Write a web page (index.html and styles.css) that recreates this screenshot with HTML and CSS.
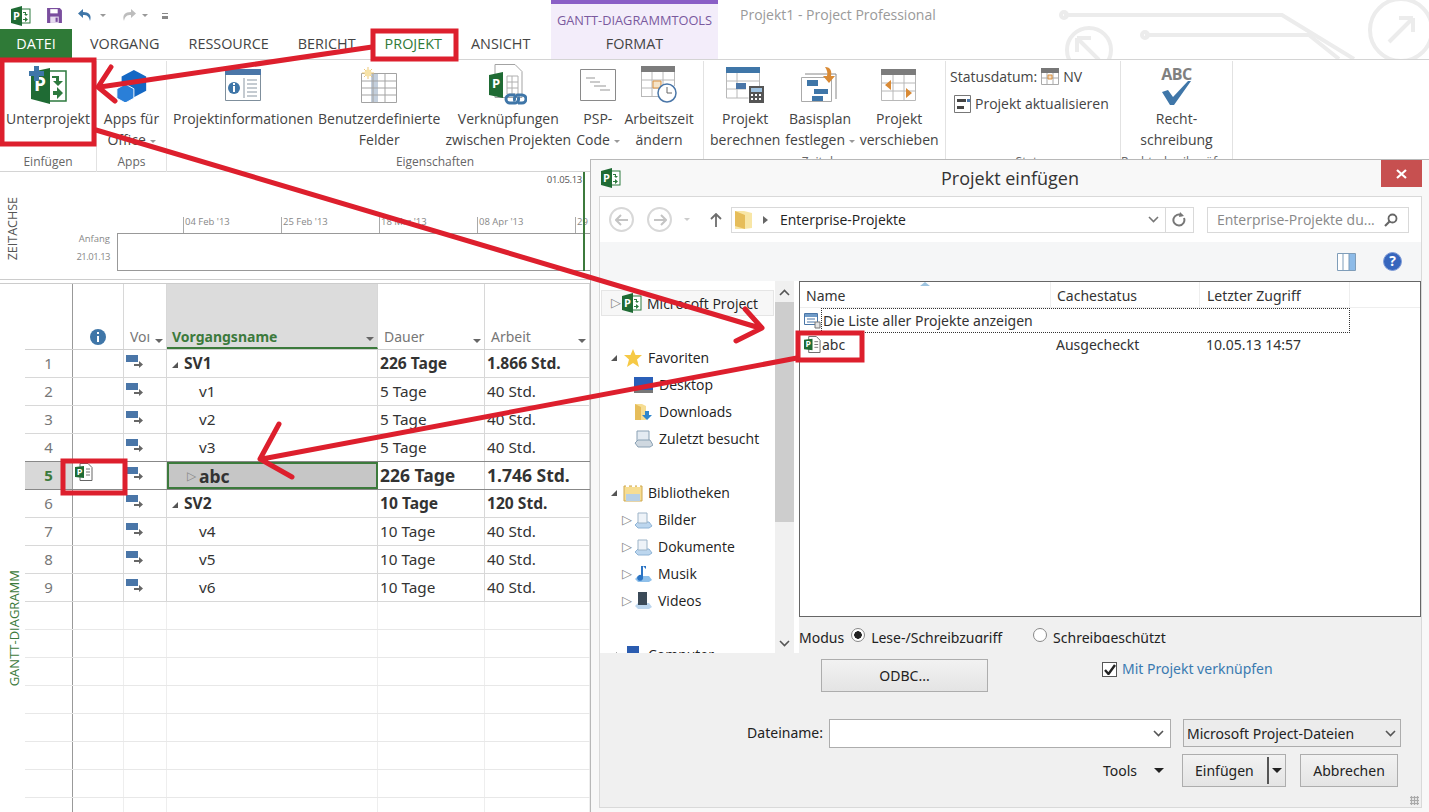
FILE: index.html
```html
<!DOCTYPE html>
<html lang="de">
  <head>
    <meta charset="UTF-8" />
    <title>Projekt einfügen</title>
    <link rel="stylesheet" href="styles.css">
  </head>
  <body>
    <svg class="defs" width="0" height="0">
      <defs>
        <symbol id="proj" viewBox="0 0 20 20">
          <rect x="9" y="3" width="10" height="14" fill="#fff" stroke="#2d7a3e" />
          <path d="M12 6h3v2h2l-2 2-2-2h1V7h-2zM12 13h2v-2l3 2.500-3 2.500v-2h-2z" fill="#2d7a3e" />
          <path d="M0 3 11 0v20L0 17z" fill="#1f6b34" />
          <text x="5.500" y="13.500" class="p-letter" text-anchor="middle">P</text>
        </symbol>
        <symbol id="pfile" viewBox="0 0 18 18">
          <path d="M5 .5h8l4 4v13H5z" fill="#fff" stroke="#666" />
          <path d="M11 6h4M11 9h4M11 12h4" stroke="#777" />
          <path d="M0 4 9 3v12L0 14z" fill="#1f6b34" />
          <text x="4.500" y="12" class="p-small" text-anchor="middle">P</text>
        </symbol>
        <symbol id="mode" viewBox="0 0 18 14">
          <path d="M0 1h12v7H0z" fill="#4a76a8" />
          <path d="M8 10h5V7l4 3.500-4 3.500V12H8z" fill="#666" />
        </symbol>
        <symbol id="folder" viewBox="0 0 20 20">
          <path d="M1 1h9l8 2v15l-8 1H1z" fill="#f8e6a6" />
          <path d="M1 1l10 4v14L1 16z" fill="#e6bd5a" />
        </symbol>
        <symbol id="lib" viewBox="0 0 20 18">
          <path d="M1 2h18v15H1z" fill="#f6dd93" stroke="#cfa951" />
          <path d="M3 10h14v7H3z" fill="#b7d0e6" />
          <path d="M3 2h3M9 2h3M14 2h3" stroke="#fff" stroke-width="2" />
        </symbol>
        <symbol id="libitem" viewBox="0 0 20 18">
          <path d="M2 14 5 11h11l3 4-3 2H5z" fill="#bcd6ee" stroke="#8fb4d6" />
          <path d="M5 2h9v10H5z" fill="#eef3f8" stroke="#9db4c8" />
        </symbol>
      </defs>
    </svg>

    <div class="titlebar">
      <div class="qat">
        <svg class="qat-icon" width="20" height="20"><use href="#proj" /></svg>
        <svg class="qat-icon" width="17" height="17" viewBox="0 0 16 16"><path d="M1 1h12l2 2v12H1z" fill="#7a4e9e" /><path d="M4 2h7v4H4z" fill="#fff" /><path d="M4 9h8v6H4z" fill="#e6dcef" /><path d="M9 10h2v4H9z" fill="#7a4e9e" /></svg>
        <svg class="qat-icon qat-undo" width="20" height="16" viewBox="0 0 20 16"><path d="M7 1 2 5.500 7 10V7c4 0 6 1 7 6 2-6-1-9-7-9z" fill="#3f76a8" /></svg>
        <span class="caret"></span>
        <svg class="qat-icon qat-redo" width="20" height="16" viewBox="0 0 20 16"><path d="M13 1l5 4.500L13 10V7c-4 0-6 1-7 6-2-6 1-9 7-9z" fill="#bdbdbd" /></svg>
        <span class="caret"></span>
        <span class="qat-more"></span>
      </div>
      <div class="tool-title">GANTT-DIAGRAMMTOOLS</div>
      <div class="app-title">Projekt1 - Project Professional</div>
      <svg class="circuit" width="400" height="59" viewBox="0 0 400 59">
        <g fill="none" stroke="#ececec" stroke-width="4">
          <path d="M35 15H253L325 59" />
          <circle cx="35" cy="15" r="3" />
          <path d="M116 35H280L310 59" />
          <circle cx="116" cy="35" r="3" />
          <circle cx="60" cy="50" r="22" />
          <circle cx="372" cy="30" r="31" />
          <path d="M48 38l22 22M48 38h14M48 38v14M360 42l24-24M384 18h-14M384 18v14" />
        </g>
      </svg>
    </div>

    <div class="tabs">
      <span class="tab tab-file">DATEI</span>
      <span class="tab tab-1">VORGANG</span>
      <span class="tab tab-2">RESSOURCE</span>
      <span class="tab tab-3">BERICHT</span>
      <span class="tab tab-4 tab-active">PROJEKT</span>
      <span class="tab tab-5">ANSICHT</span>
      <span class="tab tab-format">FORMAT</span>
    </div>

    <div class="ribbon">
      <div class="group g-insert">
        <div class="group-btns">
          <div class="big">
            <svg class="big-icon" width="38" height="38" viewBox="0 0 38 38">
              <path d="M19 5h18v30H19z" fill="#fff" stroke="#2d7a3e" stroke-width="1.500" />
              <path d="M23 10h7v5h4l-5 5-5-5h3v-3h-4zM24 25h4v-4l6 6-6 6v-4h-4z" fill="#2d7a3e" />
              <path d="M2 6 21 2v36L2 33z" fill="#1f6b34" />
              <text x="11" y="25" class="p-big" text-anchor="middle">P</text>
              <path d="M5 0h5v5h5v5h-5v5H5v-5H0V5h5z" fill="#3f76a8" />
            </svg>
            <span>Unterprojekt</span>
          </div>
        </div>
        <div class="group-label">Einfügen</div>
      </div>
      <div class="group g-apps">
        <div class="group-btns">
          <div class="big">
            <svg class="big-icon" width="36" height="34" viewBox="0 0 36 36">
              <path d="M20 2 33 9v15l-13 7-13-7V9z" fill="#1468c4" />
              <path d="M11 17 20 22v10l-9 5-9-5V22z" fill="#2a7fd8" stroke="#fff" />
            </svg>
            <span>Apps für<br />Office <i class="caret"></i></span>
          </div>
        </div>
        <div class="group-label">Apps</div>
      </div>
      <div class="group g-props">
        <div class="group-btns">
          <div class="big">
            <svg class="big-icon" width="36" height="32" viewBox="0 0 36 32">
              <path d="M.5 .5h35v31H.5z" fill="#fff" stroke="#7f8f9c" />
              <path d="M0 0h36v6H0z" fill="#4a76a8" />
              <circle cx="9" cy="19" r="6" fill="#3f76a8" />
              <path d="M8 17h2v6H8zM8 14h2v2H8z" fill="#fff" />
              <path d="M19 9v20M22 11h10M22 15h10M22 19h10M22 23h10M22 27h10" stroke="#8a97a3" />
            </svg>
            <span>Projektinformationen</span>
          </div>
          <div class="big">
            <svg class="big-icon" width="36" height="36" viewBox="0 0 36 36">
              <path d="M10 6h7v30h-7z" fill="#c3cfdd" />
              <path d="M.5 6.500h35v29H.5zM12 6v30M24 6v30M0 14h36M0 21h36M0 28h36" fill="none" stroke="#a3a3a3" />
              <path d="M7 0v12M1 6h12M3 2l8 8M11 2l-8 8" stroke="#ecc878" />
              <circle cx="7" cy="6" r="3.500" fill="#f7e3a8" />
            </svg>
            <span>Benutzerdefinierte<br />Felder</span>
          </div>
          <div class="big">
            <svg class="big-icon" width="38" height="41" viewBox="0 0 38 41">
              <path d="M6 .5h20l7 7v26H6z" fill="#fff" stroke="#a3a3a3" />
              <path d="M18 12h11v18H18zM23 12v18M18 18h11M18 24h11" fill="none" stroke="#b0b0b0" />
              <path d="M0 11 14 8v26L0 31z" fill="#1f6b34" />
              <text x="7" y="24" class="p-med" text-anchor="middle">P</text>
              <path d="M26 31h-5a4 4 0 0 0 0 8h5a4 4 0 0 0 3-6M29 39h4a4 4 0 0 0 0-8h-4a4 4 0 0 0-3 6" fill="none" stroke="#3f76a8" stroke-width="3" />
            </svg>
            <span>Verknüpfungen<br />zwischen Projekten</span>
          </div>
          <div class="big">
            <svg class="big-icon" width="36" height="32" viewBox="0 0 36 32">
              <path d="M.5 .5h35v31H.5z" fill="#fff" stroke="#8a8a8a" />
              <path d="M6 9h9M10 13h10M14 17h12M20 21h10" stroke="#bbb" stroke-width="1.500" />
            </svg>
            <span>PSP-<br />Code <i class="caret"></i></span>
          </div>
          <div class="big">
            <svg class="big-icon" width="36" height="37" viewBox="0 0 36 37">
              <path d="M0 0h34v6H0z" fill="#7c7c7c" />
              <path d="M.5 6v25M11 6v25M22 6v25M33.500 6v14M0 14h34M0 22h34M0 30.500h20" fill="none" stroke="#b8b8b8" />
              <path d="M12 15h8v7h-8z" fill="#f6e4c8" stroke="#d9903e" />
              <circle cx="26" cy="27" r="9" fill="#fff" stroke="#4a76a8" stroke-width="1.500" />
              <path d="M26 21v6h5" fill="none" stroke="#666" />
            </svg>
            <span>Arbeitszeit<br />ändern</span>
          </div>
        </div>
        <div class="group-label">Eigenschaften</div>
      </div>
      <div class="group g-plan">
        <div class="group-btns">
          <div class="big">
            <svg class="big-icon" width="38" height="36" viewBox="0 0 38 36">
              <path d="M0 0h34v6H0z" fill="#3f76a8" />
              <path d="M.5 6v25h22M33.500 6v14M11 6v25M0 14h34M0 22h20" fill="none" stroke="#b8b8b8" />
              <path d="M10 16h10v6H10z" fill="#4a76a8" />
              <path d="M23 19h15v17H23z" fill="#555" />
              <path d="M25 21h11v4H25z" fill="#9fc2e0" />
              <path d="M25 27h2v2h-2zM29 27h2v2h-2zM33 27h2v2h-2zM25 31h2v2h-2zM29 31h2v2h-2zM33 31h2v2h-2z" fill="#fff" />
            </svg>
            <span>Projekt<br />berechnen</span>
          </div>
          <div class="big">
            <svg class="big-icon" width="38" height="36" viewBox="0 0 38 36">
              <path d="M.5 10.500h30v24H.5z" fill="#fff" stroke="#aaa" />
              <path d="M4 7h31v25" fill="none" stroke="#888" />
              <path d="M6 13h11v6H6zM13 22h14v5H13zM11 29h11v5H11z" fill="#3f76a8" />
              <path d="M24 0c6 0 7 5 6 9h4l-6 7-6-7h4c1-3 0-6-2-9z" fill="#d98a35" />
            </svg>
            <span>Basisplan<br />festlegen <i class="caret"></i></span>
          </div>
          <div class="big">
            <svg class="big-icon" width="36" height="32" viewBox="0 0 36 32">
              <path d="M0 0h35v6H0z" fill="#7c7c7c" />
              <path d="M.5 6v25.500h34V6M12 6v25M23 6v25M0 14h35M0 22h35" fill="none" stroke="#b8b8b8" />
              <path d="M10 11 4 16l6 5zM25 19l6 5-6 5z" fill="#d98a35" />
            </svg>
            <span>Projekt<br />verschieben</span>
          </div>
        </div>
        <div class="group-label">Zeitplan</div>
      </div>
      <div class="group g-status">
        <div class="small-btns">
          <div class="small">
            Statusdatum:
            <svg width="18" height="17" viewBox="0 0 18 17">
              <path d="M0 0h18v5H0z" fill="#777" />
              <path d="M.5 5v11.500h17V5M6 5v12M12 5v12M0 10h18" fill="none" stroke="#aaa" />
              <path d="M7 7h4v4H7z" fill="#f5dcc0" stroke="#d9903e" />
            </svg>
            NV
          </div>
          <div class="small small-update">
            <svg width="17" height="18" viewBox="0 0 17 18">
              <path d="M.5 .5h16v17H.5z" fill="#fff" stroke="#777" />
              <path d="M3 4h9v3H3zM3 11h7v3H3z" fill="#444" />
              <path d="M13 4h3v3h-3z" fill="#4a76a8" />
            </svg>
            Projekt aktualisieren
          </div>
        </div>
        <div class="group-label">Status</div>
      </div>
      <div class="group g-spell">
        <div class="group-btns">
          <div class="big">
            <div class="abc">
              <b>ABC</b>
              <svg width="32" height="24" viewBox="0 0 32 24"><path d="M2 11l6-2 5 7L28 0h3L14 24h-4z" fill="#3f76a8" /></svg>
            </div>
            <span>Recht-<br />schreibung</span>
          </div>
        </div>
        <div class="group-label">Rechtschreibprüfung</div>
      </div>
    </div>

    <div class="timeline">
      <div class="side-label">ZEITACHSE</div>
      <div class="tl-start"><span>Anfang</span><span class="tl-date">21.01.13</span></div>
      <div class="tl-track">
        <div class="tl-ticks">
          <span class="tick">04 Feb '13</span>
          <span class="tick">25 Feb '13</span>
          <span class="tick">18 Mrz '13</span>
          <span class="tick">08 Apr '13</span>
          <span class="tick">29</span>
        </div>
        <div class="tl-bar"></div>
      </div>
      <div class="tl-today"><span>01.05.13</span></div>
    </div>

    <div class="sheet">
      <div class="side-label side-gantt">GANTT-DIAGRAMM</div>
      <div class="grid">
        <div class="row head">
          <div class="cell"></div>
          <div class="cell info"><svg width="16" height="16" viewBox="0 0 16 16"><circle cx="8" cy="8" r="8" fill="#3f76a8" /><path d="M7 7h2v6H7zM7 3h2v2H7z" fill="#fff" /></svg></div>
          <div class="cell hd">Voı <i class="sort"></i></div>
          <div class="cell hd hd-name">Vorgangsname <i class="sort"></i></div>
          <div class="cell hd">Dauer <i class="sort"></i></div>
          <div class="cell hd">Arbeit <i class="sort"></i></div>
        </div>
        <div class="row bold"><div class="cell num">1</div><div class="cell"></div><div class="cell mode"><svg width="18" height="14"><use href="#mode" /></svg></div><div class="cell name"><i class="open"></i>SV1</div><div class="cell">226 Tage</div><div class="cell">1.866 Std.</div></div>
        <div class="row"><div class="cell num">2</div><div class="cell"></div><div class="cell mode"><svg width="18" height="14"><use href="#mode" /></svg></div><div class="cell name sub">v1</div><div class="cell">5 Tage</div><div class="cell">40 Std.</div></div>
        <div class="row"><div class="cell num">3</div><div class="cell"></div><div class="cell mode"><svg width="18" height="14"><use href="#mode" /></svg></div><div class="cell name sub">v2</div><div class="cell">5 Tage</div><div class="cell">40 Std.</div></div>
        <div class="row"><div class="cell num">4</div><div class="cell"></div><div class="cell mode"><svg width="18" height="14"><use href="#mode" /></svg></div><div class="cell name sub">v3</div><div class="cell">5 Tage</div><div class="cell">40 Std.</div></div>
        <div class="row bold selected"><div class="cell num">5</div><div class="cell file"><svg width="18" height="18"><use href="#pfile" /></svg></div><div class="cell mode"><svg width="18" height="14"><use href="#mode" /></svg></div><div class="cell name sel"><i class="closed"></i>abc</div><div class="cell">226 Tage</div><div class="cell">1.746 Std.</div></div>
        <div class="row bold"><div class="cell num">6</div><div class="cell"></div><div class="cell mode"><svg width="18" height="14"><use href="#mode" /></svg></div><div class="cell name"><i class="open"></i>SV2</div><div class="cell">10 Tage</div><div class="cell">120 Std.</div></div>
        <div class="row"><div class="cell num">7</div><div class="cell"></div><div class="cell mode"><svg width="18" height="14"><use href="#mode" /></svg></div><div class="cell name sub">v4</div><div class="cell">10 Tage</div><div class="cell">40 Std.</div></div>
        <div class="row"><div class="cell num">8</div><div class="cell"></div><div class="cell mode"><svg width="18" height="14"><use href="#mode" /></svg></div><div class="cell name sub">v5</div><div class="cell">10 Tage</div><div class="cell">40 Std.</div></div>
        <div class="row"><div class="cell num">9</div><div class="cell"></div><div class="cell mode"><svg width="18" height="14"><use href="#mode" /></svg></div><div class="cell name sub">v6</div><div class="cell">10 Tage</div><div class="cell">40 Std.</div></div>
        <div class="row empty"><div class="cell"></div><div class="cell"></div><div class="cell"></div><div class="cell"></div><div class="cell"></div><div class="cell"></div></div>
        <div class="row empty"><div class="cell"></div><div class="cell"></div><div class="cell"></div><div class="cell"></div><div class="cell"></div><div class="cell"></div></div>
        <div class="row empty"><div class="cell"></div><div class="cell"></div><div class="cell"></div><div class="cell"></div><div class="cell"></div><div class="cell"></div></div>
        <div class="row empty"><div class="cell"></div><div class="cell"></div><div class="cell"></div><div class="cell"></div><div class="cell"></div><div class="cell"></div></div>
        <div class="row empty"><div class="cell"></div><div class="cell"></div><div class="cell"></div><div class="cell"></div><div class="cell"></div><div class="cell"></div></div>
        <div class="row empty"><div class="cell"></div><div class="cell"></div><div class="cell"></div><div class="cell"></div><div class="cell"></div><div class="cell"></div></div>
        <div class="row empty"><div class="cell"></div><div class="cell"></div><div class="cell"></div><div class="cell"></div><div class="cell"></div><div class="cell"></div></div>
        <div class="row empty"><div class="cell"></div><div class="cell"></div><div class="cell"></div><div class="cell"></div><div class="cell"></div><div class="cell"></div></div>
      </div>
    </div>

    <div class="dialog">
      <div class="dlg-title">
        <svg class="dlg-icon" width="20" height="20"><use href="#proj" /></svg>
        <span>Projekt einfügen</span>
        <div class="dlg-close">
          <svg width="11" height="10" viewBox="0 0 11 10"><path d="M1 1l9 8M10 1 1 9" stroke="#fff" stroke-width="2.200" /></svg>
        </div>
      </div>
      <div class="dlg-body">
        <div class="addr">
          <span class="nav-circle"><svg width="14" height="12" viewBox="0 0 14 12"><path d="M6 1 1 6l5 5M1 6h12" fill="none" stroke="#c4c4c4" stroke-width="2" /></svg></span>
          <span class="nav-circle nav-fwd"><svg width="14" height="12" viewBox="0 0 14 12"><path d="M8 1l5 5-5 5M13 6H1" fill="none" stroke="#c4c4c4" stroke-width="2" /></svg></span>
          <span class="nav-drop"></span>
          <svg class="nav-up" width="12" height="14" viewBox="0 0 12 14"><path d="M1 6l5-5 5 5M6 1v13" fill="none" stroke="#6d6d6d" stroke-width="1.800" /></svg>
          <div class="addr-box">
            <svg width="20" height="20"><use href="#folder" /></svg>
            <i class="crumb"></i>
            <span class="addr-text">Enterprise-Projekte</span>
            <svg class="chev" width="11" height="7" viewBox="0 0 11 7"><path d="M1 1l4.500 4.500L10 1" fill="none" stroke="#777" stroke-width="1.600" /></svg>
            <span class="refresh"><svg width="15" height="16" viewBox="0 0 15 16"><path d="M12 6a5.500 5.500 0 1 1-2-2.500" fill="none" stroke="#777" stroke-width="2" /><path d="M8 0l4 4-5 1z" fill="#777" /></svg></span>
          </div>
          <div class="search-box">
            <span>Enterprise-Projekte du...</span>
            <svg width="14" height="14" viewBox="0 0 14 14"><circle cx="8.500" cy="5.500" r="4" fill="none" stroke="#666" stroke-width="1.800" /><path d="M6 8l-5 5" stroke="#666" stroke-width="2.200" /></svg>
          </div>
        </div>
        <div class="dlg-tools">
          <svg width="19" height="18" viewBox="0 0 19 18"><path d="M.5 .5h18v17H.5z" fill="#fff" stroke="#7f9db9" /><path d="M12 1h6v16h-6z" fill="#8dbbe8" /><path d="M6 1v16M12 1v16" stroke="#7f9db9" /></svg>
          <svg class="help" width="19" height="19" viewBox="0 0 19 19"><circle cx="9.500" cy="9.500" r="9" fill="#3766bd" stroke="#7f9bd6" /><text x="9.500" y="14" class="help-q" text-anchor="middle">?</text></svg>
        </div>
        <div class="dlg-main">
          <div class="tree">
            <div class="node node-hl"><i class="closed"></i><svg width="20" height="20"><use href="#proj" /></svg><span>Microsoft Project</span></div>
            <div class="node node-sec"><i class="open"></i><svg width="20" height="18" viewBox="0 0 18 18"><path d="M9 0l2.500 6H18l-5 4.500L15 18l-6-4-6 4 2-7.500L0 6h6.500z" fill="#f6c945" /></svg><span>Favoriten</span></div>
            <div class="node node-in"><svg width="19" height="16" viewBox="0 0 19 16"><path d="M0 0h19v13H0z" fill="#2a5fb8" /><path d="M0 13h19v3H0z" fill="#777" /></svg><span>Desktop</span></div>
            <div class="node node-in"><svg width="19" height="18" viewBox="0 0 19 18"><path d="M1 1h7l4 2v14H1z" fill="#f6dd93" /><path d="M1 1l6 3v13H1z" fill="#e6bd5a" /><path d="M11 8h4v4h3l-5 5-5-5h3z" fill="#2f86cc" /></svg><span>Downloads</span></div>
            <div class="node node-in"><svg width="19" height="18" viewBox="0 0 19 18"><path d="M3 1h12v10H3z" fill="#e4ebf2" stroke="#8aa1b4" /><path d="M1 13 4 10h12l3 5-3 2H4z" fill="#cfd8e0" stroke="#8aa1b4" /></svg><span>Zuletzt besucht</span></div>
            <div class="node node-sec"><i class="open"></i><svg width="20" height="18"><use href="#lib" /></svg><span>Bibliotheken</span></div>
            <div class="node node-lib"><i class="closed"></i><svg width="20" height="18"><use href="#libitem" /></svg><span>Bilder</span></div>
            <div class="node node-lib"><i class="closed"></i><svg width="20" height="18"><use href="#libitem" /></svg><span>Dokumente</span></div>
            <div class="node node-lib"><i class="closed"></i><svg width="20" height="18" viewBox="0 0 20 18"><path d="M2 14 5 11h11l3 4-3 2H5z" fill="#8fc0ea" /><path d="M10 1v11a3 3 0 1 1-2-2V1h5v3z" fill="#2b74c4" /></svg><span>Musik</span></div>
            <div class="node node-lib"><i class="closed"></i><svg width="20" height="18" viewBox="0 0 20 18"><path d="M2 14 5 11h11l3 4-3 2H5z" fill="#bcd6ee" /><path d="M5 0h9v13H5z" fill="#3b4a58" /></svg><span>Videos</span></div>
            <div class="node node-sec"><i class="open"></i><svg width="20" height="18" viewBox="0 0 20 18"><path d="M4 0h12v12H4z" fill="#2b5cb0" /></svg><span>Computer</span></div>
          </div>
          <div class="scrollbar">
            <svg width="11" height="7" viewBox="0 0 11 7"><path d="M1 6l4.500-4.500L10 6" fill="none" stroke="#555" stroke-width="1.600" /></svg>
            <div class="thumb"></div>
            <svg class="scroll-down" width="11" height="7" viewBox="0 0 11 7"><path d="M1 1l4.500 4.500L10 1" fill="none" stroke="#555" stroke-width="1.600" /></svg>
          </div>
          <div class="right">
            <div class="list">
              <div class="list-head">
                <span class="col-name">Name</span>
                <span class="col-status">Cachestatus</span>
                <span class="col-date">Letzter Zugriff</span>
                <i class="sort-up"></i>
              </div>
              <div class="list-row">
                <svg width="17" height="17" viewBox="0 0 17 17"><path d="M.5 1.500h13v11H.5z" fill="#fff" stroke="#4a76a8" /><path d="M1 2h12v3H1z" fill="#6f9bc8" /><path d="M3 7h8M3 10h8" stroke="#4a76a8" /><path d="M11 10h5v6h-5z" fill="#e4e4e4" stroke="#777" /></svg>
                <span class="focus-box">Die Liste aller Projekte anzeigen</span>
              </div>
              <div class="list-row list-file">
                <svg width="17" height="17"><use href="#pfile" /></svg>
                <span class="file-name">abc</span>
                <span class="col-status">Ausgecheckt</span>
                <span class="col-date">10.05.13 14:57</span>
              </div>
            </div>
            <div class="modus">
              <span>Modus</span>
              <i class="radio radio-on"></i><span>Lese-/Schreibzugriff</span>
              <i class="radio radio-off"></i><span>Schreibgeschützt</span>
            </div>
          </div>
        </div>
        <div class="dlg-foot">
          <div class="foot-a">
            <div class="btn btn-odbc">ODBC...</div>
            <i class="check"><svg width="12" height="11" viewBox="0 0 12 11"><path d="M1 6l3.500 4L11 1" fill="none" stroke="#222" stroke-width="2.400" /></svg></i>
            <span class="link-label">Mit Projekt verknüpfen</span>
          </div>
          <div class="foot-b">
            <span class="file-label">Dateiname:</span>
            <div class="input"><svg width="11" height="7" viewBox="0 0 11 7"><path d="M1 1l4.500 4.500L10 1" fill="none" stroke="#555" stroke-width="1.600" /></svg></div>
            <div class="type-select">Microsoft Project-Dateien<svg width="11" height="7" viewBox="0 0 11 7"><path d="M1 1l4.500 4.500L10 1" fill="none" stroke="#555" stroke-width="1.600" /></svg></div>
          </div>
          <div class="foot-c">
            <span class="tools-label">Tools</span>
            <i class="tools-drop"></i>
            <div class="btn btn-ins"><span>Einfügen</span><i class="ins-split"></i><i class="tools-drop"></i></div>
            <div class="btn btn-cancel">Abbrechen</div>
          </div>
          <div class="grip"></div>
        </div>
      </div>
    </div>

    <svg class="marks" width="1429" height="812" viewBox="0 0 1429 812">
      <g fill="none" stroke="#dd1f2d">
        <rect x="373" y="31" width="83" height="28" stroke-width="5" />
        <rect x="2" y="60" width="92" height="84" stroke-width="5" />
        <rect x="63" y="461" width="62" height="32" stroke-width="5" />
        <rect x="798" y="333" width="64" height="27" stroke-width="5" />
        <g stroke-width="5" stroke-linecap="round" stroke-linejoin="round">
          <path d="M372 47 100 87M111 67 98 87 115 101" />
          <path d="M96 130 760 328M745 309 762 328 736 341" />
          <path d="M797 358 262 459M279 424 260 459 292 477" />
        </g>
      </g>
    </svg>
  </body>
</html>
```

FILE: styles.css
```css
* {
  box-sizing: border-box;
}

html,
body {
  margin: 0;
  height: 812px;
  overflow: hidden;
}

body {
  position: relative;
  width: 1429px;
  background: #fff;
  color: #444;
  font-family: "Open Sans", "Noto Sans", sans-serif;
  font-size: 14px;
}

.defs {
  position: absolute;
}

i {
  font-style: normal;
}

.p-letter {
  font: bold 11px "Open Sans", sans-serif;
  fill: #fff;
}

.p-small {
  font: bold 9px "Open Sans", sans-serif;
  fill: #fff;
}

.p-big {
  font: bold 19px "Open Sans", sans-serif;
  fill: #fff;
}

.p-med {
  font: bold 13px "Open Sans", sans-serif;
  fill: #fff;
}

.help-q {
  font: bold 14px "Open Sans", sans-serif;
  fill: #fff;
}

/* title bar */
.titlebar {
  position: relative;
  display: flex;
  height: 29px;
}

.qat {
  display: flex;
  align-items: center;
  width: 551px;
  padding: 2px 0 0 11px;
}

.qat-icon {
  margin-right: 15px;
}

.qat-undo,
.qat-redo {
  margin-right: 4px;
  margin-left: -2px;
}

.caret {
  display: inline-block;
  width: 0;
  height: 0;
  margin-right: 14px;
  border: 3px solid transparent;
  border-top: 3px solid #999;
  border-bottom: 0;
  vertical-align: middle;
}

.big .caret {
  margin-right: 0;
}

.qat-more {
  width: 6px;
  height: 6px;
  border-top: 1px solid #888;
  border-bottom: 3px solid #888;
}

.tool-title {
  width: 167px;
  padding-top: 7px;
  border-top: 4px solid #8a5fc6;
  background: #f3edfa;
  color: #7a5a9e;
  font-size: 12.800px;
  text-align: center;
  white-space: nowrap;
}

.app-title {
  padding: 5px 0 0 22px;
  color: #9a9a9a;
  font-size: 14px;
}

.circuit {
  position: absolute;
  top: 0;
  right: 0;
  height: 59px;
  z-index: -1;
}

/* tabs */
.tabs {
  position: relative;
  display: flex;
  height: 31px;
  border-bottom: 1px solid #d4d4d4;
  font-size: 14.400px;
  line-height: 30px;
  white-space: nowrap;
}

.tab-file {
  width: 72px;
  background: #2f7a37;
  color: #fff;
  text-align: center;
}

.tab-1 {
  margin-left: 18px;
}

.tab-2,
.tab-3,
.tab-4,
.tab-5 {
  margin-left: 29px;
}

.tab-active {
  color: #2f7a37;
}

.tab-format {
  position: absolute;
  top: 0;
  left: 551px;
  width: 167px;
  height: 30px;
  background: #f3edfa;
  text-align: center;
}

/* ribbon */
.ribbon {
  display: flex;
  height: 112px;
  border-bottom: 1px solid #d4d4d4;
}

.group {
  display: flex;
  flex-direction: column;
  flex: none;
  height: 111px;
  margin-top: 1px;
  border-right: 1px solid #e2e2e2;
}

.g-insert {
  width: 97px;
}

.g-apps {
  width: 70px;
}

.g-props {
  width: 537px;
}

.g-plan {
  width: 242px;
}

.g-status {
  width: 175px;
}

.g-spell {
  width: 112px;
}

.group-btns {
  display: flex;
  flex: 1;
  justify-content: center;
  gap: 1px;
  min-width: 0;
}

.g-props .group-btns,
.g-plan .group-btns {
  justify-content: flex-start;
  padding-left: 4px;
}

.big {
  display: grid;
  grid-template-rows: 47px 1fr;
  justify-items: center;
  align-items: center;
  padding: 0 2px;
  line-height: 21px;
  text-align: center;
  white-space: nowrap;
}

.big > span {
  align-self: start;
}

.group-label {
  height: 21px;
  margin-top: 1px;
  color: #666;
  font-size: 12px;
  line-height: 22px;
  text-align: center;
  white-space: nowrap;
}

.small-btns {
  flex: 1;
  padding: 5px 0 0 4px;
}

.small {
  display: flex;
  align-items: center;
  gap: 4px;
  height: 21px;
  white-space: nowrap;
}

.small-update {
  margin-top: 6px;
  margin-left: 4px;
}

.abc {
  display: flex;
  flex-direction: column;
  align-items: center;
  align-self: start;
  margin-top: 3px;
  color: #808080;
  font-size: 16px;
  letter-spacing: -0.500px;
  line-height: 20px;
}

.abc svg {
  margin-top: -3px;
}

/* timeline */
.timeline {
  position: relative;
  height: 108px;
  border-bottom: 1px solid #ccc;
}

.side-label {
  position: absolute;
  left: 4px;
  top: 25px;
  color: #555;
  font-size: 12.500px;
  writing-mode: vertical-rl;
  transform: rotate(180deg);
}

.tl-start {
  position: absolute;
  top: 60px;
  left: 70px;
  display: flex;
  flex-direction: column;
  gap: 5px;
  width: 40px;
  color: #888;
  font-size: 9.500px;
  line-height: 13px;
  text-align: right;
}

.tl-date {
  letter-spacing: -0.500px;
}

.tl-track {
  position: absolute;
  top: 45px;
  left: 117px;
  width: 473px;
}

.tl-ticks {
  display: flex;
  height: 16px;
}

.tick {
  flex: none;
  width: 98px;
  padding-left: 1px;
  border-left: 1px solid #aaa;
  color: #888;
  font-size: 9.500px;
  line-height: 9px;
  white-space: nowrap;
}

.tick:first-child {
  margin-left: 66px;
}

.tl-bar {
  height: 38px;
  border: 1px solid #999;
  border-right: 0;
}

.tl-today {
  position: absolute;
  top: 0;
  left: 583px;
  width: 2px;
  height: 99px;
  background: #3c7a3c;
}

.tl-today span {
  position: absolute;
  right: 3px;
  top: 1px;
  color: #555;
  font-size: 9.500px;
  letter-spacing: -0.300px;
  white-space: nowrap;
}

/* sheet */
.sheet {
  position: relative;
  height: 533px;
  margin-top: 3px;
  padding-left: 25px;
  border-top: 1px solid #ccc;
}

.side-gantt {
  top: 286px;
  left: 5px;
  color: #3c7a3c;
  font-size: 13px;
}

.grid {
  width: 565px;
}

.row {
  display: grid;
  grid-template-columns: 48px 51px 43px 211px 107px 105px;
  height: 28px;
  border-bottom: 1px solid #d8d8d8;
  color: #333;
  font-size: 15.300px;
  font-family: "Noto Sans", sans-serif;
  line-height: 26px;
}

.cell {
  padding: 0 2px;
  border-right: 1px solid #d8d8d8;
  white-space: nowrap;
  overflow: hidden;
}

.cell:first-child {
  border-right: 1px solid #999;
}

.head {
  height: 66px;
  border-bottom: 1px solid #d0d0d0;
}

.hd {
  position: relative;
  padding: 42px 0 0 6px;
  color: #777;
  font-size: 14px;
  line-height: 22px;
}

.hd-name {
  padding-left: 5px;
  border-bottom: 2px solid #3c7a3c;
  background: #dcdcdc;
  color: #3c7a3c;
  font-weight: bold;
}

.sort {
  position: absolute;
  right: 3px;
  bottom: 6px;
  border: 4px solid transparent;
  border-top: 4px solid #666;
  border-bottom: 0;
}

.info {
  padding: 42px 0 0 17px;
}

.num {
  color: #777;
  font-size: 15px;
  font-weight: normal;
  text-align: center;
}

.mode {
  padding: 0 0 0 2px;
}

.mode svg {
  display: block;
  margin-top: 4px;
}

.name {
  padding-left: 5px;
}

.name .open,
.node .open {
  display: inline-block;
  width: 0;
  height: 0;
  margin-right: 6px;
  border-bottom: 6px solid #555;
  border-left: 6px solid transparent;
  vertical-align: 1px;
}

.closed {
  display: inline-block;
  width: 7px;
  margin-right: 5px;
  color: #888;
  font: normal 12px/12px "DejaVu Sans", sans-serif;
  vertical-align: 3px;
}

.closed::before {
  content: "▷";
}

.sub {
  padding-left: 32px;
}

.bold {
  font-size: 15.600px;
  font-weight: bold;
}

.selected {
  border-bottom: 1px solid #888;
  box-shadow: 0 -1px 0 #888;
  font-size: 17.500px;
}

.selected .num {
  background: #d8d8d8;
  color: #3c7a3c;
  font-size: 15px;
  font-weight: bold;
}

.file svg {
  display: block;
  margin: 1px 0 0 0;
}

.sel {
  padding-left: 18px;
  border: 2px solid #3c7a3c;
  background: #c6c6c6;
  line-height: 25px;
}

.empty {
  border-bottom-color: #e8e8e8;
}

.empty .cell:not(:first-child) {
  border-right-color: #eee;
}

.empty .cell:first-child {
  border-right: 1px solid #999;
}

/* dialog window */
.dialog {
  position: absolute;
  top: 159px;
  left: 590px;
  display: flex;
  flex-direction: column;
  width: 839px;
  height: 653px;
  border: 1px solid #b8b8b8;
  border-width: 1px 0 0 1px;
  background: #f8f8f8;
  color: #222;
}

.dlg-title {
  position: relative;
  flex: none;
  height: 36px;
  padding-top: 5px;
  color: #333;
  font-size: 18px;
  line-height: 26px;
  text-align: center;
}

.dlg-icon {
  position: absolute;
  left: 10px;
  top: 8px;
}

.dlg-close {
  position: absolute;
  top: 0;
  left: 790px;
  display: flex;
  align-items: center;
  justify-content: center;
  width: 41px;
  height: 27px;
  background: #c75050;
}

.dlg-body {
  display: flex;
  flex-direction: column;
  flex: 1;
  margin: 0 7px 4px 8px;
  border: 1px solid #d9d9d9;
  background: #fff;
}

.addr {
  position: relative;
  display: flex;
  flex: none;
  align-items: center;
  height: 45px;
  padding-left: 9px;
}

.nav-circle {
  display: flex;
  align-items: center;
  justify-content: center;
  width: 25px;
  height: 25px;
  border: 2px solid #d8d8d8;
  border-radius: 50%;
}

.nav-fwd {
  margin-left: 13px;
}

.nav-drop {
  margin-left: 12px;
  border: 3px solid transparent;
  border-top: 3px solid #ccc;
  border-bottom: 0;
}

.nav-up {
  margin-left: 20px;
}

.addr-box {
  display: flex;
  align-items: center;
  width: 463px;
  height: 26px;
  margin-left: 9px;
  padding-left: 2px;
  border: 1px solid #d9d9d9;
}

.crumb {
  margin-left: 9px;
  border: 4px solid transparent;
  border-left: 5px solid #666;
  border-right: 0;
}

.addr-text {
  flex: 1;
  margin-left: 12px;
}

.refresh {
  display: flex;
  align-items: center;
  justify-content: center;
  width: 28px;
  height: 24px;
  margin-left: 6px;
  border-left: 1px solid #d9d9d9;
}

.search-box {
  display: flex;
  align-items: center;
  justify-content: space-between;
  width: 202px;
  height: 26px;
  margin-left: 13px;
  padding: 0 10px 0 9px;
  border: 1px solid #d9d9d9;
  color: #888;
  white-space: nowrap;
}

.dlg-tools {
  display: flex;
  flex: none;
  align-items: center;
  justify-content: flex-end;
  height: 39px;
  padding-right: 19px;
  background: #f5f6f7;
}

.help {
  margin-left: 27px;
}

.dlg-main {
  display: flex;
  flex: none;
  height: 372px;
}

.tree {
  flex: none;
  width: 175px;
  height: 372px;
  padding: 9px 1px 0;
  overflow: hidden;
}

.node {
  display: flex;
  align-items: center;
  height: 27px;
  white-space: nowrap;
}

.node svg {
  flex: none;
}

.node span {
  margin-left: 5px;
}

.node i {
  flex: none;
  margin-left: 10px;
}

.node .open {
  margin-right: 6px;
}

.node .closed {
  width: 6px;
  margin-right: 5px;
  font-size: 13px;
}

.node-hl {
  height: 26px;
  margin-bottom: 28px;
  border: 1px solid #e5e5e5;
  background: #f7f7f7;
}

.node-hl i {
  margin-left: 9px;
}

.node-in {
  padding-left: 33px;
}

.node-in span {
  margin-left: 6px;
}

.node-in:nth-child(5) {
  margin-bottom: 27px;
}

.node-lib {
  padding-left: 11px;
}

.node-lib:nth-child(10) {
  margin-bottom: 27px;
}

.scrollbar {
  display: flex;
  flex: none;
  flex-direction: column;
  align-items: center;
  width: 19px;
  padding-top: 8px;
  background: #f0f0f0;
}

.thumb {
  width: 19px;
  height: 220px;
  margin-top: 6px;
  background: #cdcdcd;
}

.scroll-down {
  margin-top: 118px;
}

.right {
  flex: 1;
  margin-left: 5px;
  min-width: 0;
  background: #f0f0f0;
}

.list {
  position: relative;
  height: 336px;
  border: 1px solid #666;
  background: #fff;
  font-family: "Noto Sans", sans-serif;
}

.list-head {
  position: relative;
  height: 26px;
  border-bottom: 1px solid #eee;
  line-height: 27px;
}

.list-head span {
  position: absolute;
  top: 0;
  height: 25px;
  color: #333;
}

.col-name {
  left: 6px;
}

.list-head .col-status {
  left: 250px;
  padding-left: 6px;
  width: 150px;
  border-left: 1px solid #eee;
}

.list-head .col-date {
  left: 399px;
  padding-left: 7px;
  width: 151px;
  border-left: 1px solid #eee;
  border-right: 1px solid #eee;
}

.sort-up {
  position: absolute;
  top: 0;
  left: 120px;
  border: 5px solid transparent;
  border-bottom: 4px solid #9ec4e0;
  border-top: 0;
}

.list-row {
  display: flex;
  align-items: center;
  height: 24px;
  padding-left: 4px;
  color: #333;
}

.focus-box {
  width: 529px;
  line-height: 23px;
  border: 1px dotted #333;
  padding-left: 1px;
}

.list-file {
  position: relative;
}

.file-name {
  margin-left: 1px;
}

.list-file .col-status {
  position: absolute;
  left: 256px;
}

.list-file .col-date {
  position: absolute;
  left: 406px;
}

.modus {
  display: flex;
  align-items: flex-start;
  height: 26px;
  padding-top: 9px;
  overflow: hidden;
  font-family: "Noto Sans", sans-serif;
  line-height: 24px;
}

.radio {
  flex: none;
  width: 14px;
  height: 14px;
  margin: 2px 6px 0 7px;
  border: 1px solid #888;
  border-radius: 50%;
  background: #fff;
}

.radio-on {
  background: radial-gradient(circle, #222 3.500px, #fff 4px);
}

.radio-off {
  margin-left: 31px;
}

.dlg-foot {
  position: relative;
  flex: 1;
  background: #f0f0f0;
  font-family: "Noto Sans", sans-serif;
}

.foot-a {
  display: flex;
  height: 66px;
  padding: 6px 0 0 221px;
}

.btn {
  display: flex;
  align-items: center;
  justify-content: center;
  border: 1px solid #adadad;
  background: linear-gradient(#f2f2f2, #e4e4e4);
}

.btn-odbc {
  width: 167px;
  height: 33px;
}

.check {
  display: flex;
  align-items: center;
  justify-content: center;
  width: 15px;
  height: 15px;
  margin: 3px 5px 0 114px;
  border: 1px solid #555;
  background: #fff;
}

.link-label {
  color: #3a7ab0;
  line-height: 20px;
}

.foot-b {
  display: flex;
  height: 29px;
}

.file-label {
  width: 229px;
  padding-right: 6px;
  line-height: 28px;
  text-align: right;
}

.input {
  display: flex;
  align-items: center;
  justify-content: flex-end;
  width: 342px;
  padding-right: 6px;
  border: 1px solid #adadad;
  background: #fff;
}

.type-select {
  display: flex;
  align-items: center;
  justify-content: space-between;
  width: 218px;
  height: 28px;
  margin-left: 12px;
  padding: 0 4px 0 3px;
  border: 1px solid #adadad;
  background: #ececec;
}

.foot-c {
  display: flex;
  align-items: center;
  height: 33px;
  margin-top: 6px;
}

.tools-label {
  margin-left: 503px;
}

.tools-drop {
  margin-left: 17px;
  border: 5px solid transparent;
  border-top: 5px solid #222;
  border-bottom: 0;
}

.btn-ins {
  width: 104px;
  height: 33px;
  margin-left: 18px;
}

.btn-ins span {
  flex: 1;
  margin-left: 12px;
}

.ins-split {
  width: 2px;
  height: 27px;
  background: #555;
}

.btn-ins .tools-drop {
  margin: 0 3px;
}

.btn-cancel {
  width: 98px;
  height: 33px;
  margin-left: 14px;
}

.grip {
  position: absolute;
  right: 2px;
  bottom: 2px;
  width: 9px;
  height: 9px;
  background: radial-gradient(#aaa 1px, transparent 1.500px) 0 0 / 3px 3px;
}

/* red annotations on top of the screenshot */
.marks {
  position: absolute;
  top: 0;
  left: 0;
}
```
